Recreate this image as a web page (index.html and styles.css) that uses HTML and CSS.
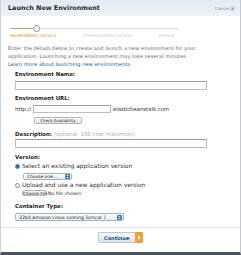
FILE: index.html
```html
<!DOCTYPE html>
<html lang="en">
<head>
    <meta charset="UTF-8">
    <title>Launch New Environment</title>
    <link rel="stylesheet" href="styles.css">
</head>
<body>

<div class="dialog">
    <!-- Title bar -->
    <div class="header">
        <h1>Launch New Environment</h1>
        <span class="cancel">Cancel <span class="close">&times;</span></span>
    </div>

    <!-- Wizard steps -->
    <div class="steps">
        <div class="track">
            <span class="dot"></span>
        </div>
        <div class="step-labels">
            <span class="step active">ENVIRONMENT DETAILS</span>
            <span class="step">CONFIGURATION DETAILS</span>
            <span class="step">REVIEW</span>
        </div>
    </div>

    <div class="content">
        <p class="intro">Enter the details below to create and launch a new environment for your<br>application. Launching a new environment may take several minutes.<br><a href="#">Learn more about launching new environments.</a></p>

        <div class="form">
            <label class="name-label">Environment Name:</label>
            <input class="text wide name-input" type="text">

            <label class="url-label">Environment URL:</label>
            <div class="url-row">
                <span>http://</span>
                <input class="text url" type="text">
                <span>.elasticbeanstalk.com</span>
            </div>
            <span class="small-btn check">Check Availability</span>

            <label class="desc-label">Description: <span class="hint">(optional, 200 char maximum)</span></label>
            <input class="text wide desc-input" type="text">

            <label class="version-label">Version:</label>
            <div class="radio-row first">
                <span class="radio checked"></span>
                <span>Select an existing application version</span>
            </div>
            <div class="select version">
                <span>Choose one...</span>
                <svg class="arrows" viewBox="0 0 6 6"><rect width="6" height="6" rx="1.2" fill="#3f7cc4"/><path d="M3 0.8 L4.4 2.5 L1.6 2.5 Z M3 5.2 L4.4 3.5 L1.6 3.5 Z" fill="#fff"/></svg>
            </div>
            <div class="radio-row">
                <span class="radio"></span>
                <span>Upload and use a new application version</span>
            </div>
            <div class="file-row">
                <span class="small-btn">Choose File</span>
                <span>No file chosen</span>
            </div>

            <label class="container-label">Container Type:</label>
            <div class="select container">
                <span>32bit Amazon Linux running Tomcat 7</span>
                <svg class="arrows" viewBox="0 0 6 6"><rect width="6" height="6" rx="1.2" fill="#3f7cc4"/><path d="M3 0.8 L4.4 2.5 L1.6 2.5 Z M3 5.2 L4.4 3.5 L1.6 3.5 Z" fill="#fff"/></svg>
            </div>
        </div>
    </div>

    <!-- Footer -->
    <div class="footer">
        <button class="continue">
            <span>Continue</span>
            <svg class="go" viewBox="0 0 8 11"><rect width="8" height="11" rx="1" fill="#eea22e"/><path d="M3 3 L5.5 5.5 L3 8 Z" fill="#fff5dc"/></svg>
        </button>
    </div>
</div>

</body>
</html>
```

FILE: styles.css
```css
body {
    margin: 0;
    padding: 0;
    background-color: #ffffff;
    font-family: "DejaVu Sans", Verdana, sans-serif;
}

.dialog {
    width: 241px;
    height: 255px;
    box-sizing: border-box;
    border-left: 1px solid #c6d6e4;
    border-right: 1px solid #c0c8d0;
    border-bottom: 3px solid #4b545d;
    background-color: white;
    display: flex;
    flex-direction: column;
}

.header {
    flex: none;
    height: 16px;
    display: flex;
    justify-content: space-between;
    align-items: center;
    padding: 0 5px 0 7px;
    background: linear-gradient(#e2ebf2, #edf2f6);
}

.header h1 {
    margin: 0;
    font-size: 6.4px;
    line-height: 8px;
    font-weight: bold;
    color: #1f2a36;
}

.cancel {
    font-size: 4.2px;
    color: #7a8fa3;
    display: flex;
    align-items: center;
    gap: 1px;
}

.close {
    display: inline-block;
    width: 5px;
    height: 5px;
    line-height: 5px;
    text-align: center;
    background-color: #d3dde6;
    color: #6d8399;
    border-radius: 1px;
}

.steps {
    flex: none;
    padding: 12px 0 0 9px;
}

.track {
    position: relative;
    width: 167px;
    height: 1px;
    background-color: #dcdfe2;
    border-right: 1px solid #c5cacf;
}

.track::before {
    content: "";
    position: absolute;
    left: 0;
    top: 0;
    width: 24px;
    height: 1px;
    background-color: #bda67e;
}

.dot {
    position: absolute;
    left: 23px;
    top: -3px;
    width: 5px;
    height: 5px;
    border: 1px solid #8a8f94;
    border-radius: 50%;
    background-color: white;
}

.step-labels {
    display: flex;
    margin-top: 5px;
    font-size: 3.9px;
    line-height: 4px;
    color: #c6cbd0;
    white-space: nowrap;
}

.step {
    width: 73px;
}

.step:nth-child(2) {
    width: 76px;
}

.step.active {
    color: #d39442;
}

.content {
    flex: 1;
    padding: 0 7px;
}

.intro {
    margin: 6px 0 0;
    font-size: 5.15px;
    line-height: 8px;
    color: #6e6e6e;
    white-space: nowrap;
}

.intro a {
    color: #215d8a;
    text-decoration: none;
}

.form {
    padding-left: 7px;
}

.form label {
    display: block;
    font-size: 5.4px;
    line-height: 7px;
    font-weight: bold;
    color: #1c1c1c;
    white-space: nowrap;
}

.name-label { margin-top: 3px; }
.url-label { margin-top: 5px; }
.desc-label { margin-top: 7px; }
.version-label { margin-top: 6px; }
.container-label { margin-top: 7px; }

.hint {
    font-weight: normal;
    font-size: 5.3px;
    color: #ababab;
}

.text {
    box-sizing: border-box;
    height: 9px;
    margin: 0;
    padding: 0;
    border: 1px solid #bdbdbd;
    border-top-color: #9c9c9c;
    background-color: white;
    display: block;
}

.wide {
    width: 192px;
}

.name-input { margin-top: 3px; }
.desc-input { margin-top: 1px; }

.url-row {
    display: flex;
    align-items: center;
    height: 8px;
    margin-top: 3px;
    font-size: 5.3px;
    color: #333;
}

.url {
    width: 78px;
    height: 8px;
    margin: 0 0 0 2px;
}

.small-btn {
    display: inline-block;
    box-sizing: border-box;
    font-size: 4px;
    line-height: 5px;
    color: #333;
    padding: 0 3px;
    border: 1px solid #b5b5b5;
    border-radius: 2px;
    background: linear-gradient(#fbfbfb, #e0e0e0);
    white-space: nowrap;
}

.check {
    display: block;
    width: 48px;
    height: 7px;
    margin: 4px 0 0 19px;
    text-align: center;
}

.radio-row {
    display: flex;
    align-items: center;
    gap: 2px;
    height: 6px;
    margin-top: 2px;
    font-size: 5.9px;
    color: #333;
    white-space: nowrap;
}

.radio {
    box-sizing: border-box;
    width: 5px;
    height: 5px;
    border: 1px solid #8c8c8c;
    border-radius: 50%;
    background-color: #f2f2f2;
}

.radio.checked {
    border-color: #4a78a8;
    background: radial-gradient(circle, #23578c 0 1px, #8fb6de 1.6px);
}

.select {
    display: flex;
    align-items: center;
    justify-content: space-between;
    box-sizing: border-box;
    padding: 0 1px 0 3px;
    border: 1px solid #a4b4c4;
    border-radius: 2px;
    background: linear-gradient(#fdfdfd, #e7ebef);
    font-size: 4.4px;
    color: #222;
    white-space: nowrap;
}

.version {
    width: 49px;
    height: 7px;
    margin: 4px 0 0 8px;
}

.container {
    width: 109px;
    height: 8px;
    margin-top: 3px;
    font-size: 4.6px;
}

.arrows {
    width: 5px;
    height: 5px;
}

.file-row {
    display: flex;
    align-items: center;
    gap: 1px;
    height: 6px;
    margin: 2px 0 0 7px;
    font-size: 4.7px;
    color: #222;
}

.file-row .small-btn {
    width: 25px;
    height: 6px;
    font-size: 4.3px;
    text-align: center;
    padding: 0;
}

.footer {
    flex: none;
    height: 24px;
    border-top: 1px solid #e4e4e4;
    display: flex;
    justify-content: center;
    align-items: flex-start;
}

.continue {
    display: flex;
    align-items: center;
    justify-content: space-between;
    box-sizing: border-box;
    width: 45px;
    height: 11px;
    margin-top: 4px;
    padding: 0 0 0 5px;
    border: 1px solid #bcc6ce;
    border-radius: 2px;
    background: linear-gradient(#fafbfc, #dce2e7);
    font-family: "DejaVu Sans", Verdana, sans-serif;
    font-size: 5px;
    font-weight: bold;
    color: #1e4e78;
}

.go {
    width: 8px;
    height: 11px;
    margin-right: -1px;
}
```
